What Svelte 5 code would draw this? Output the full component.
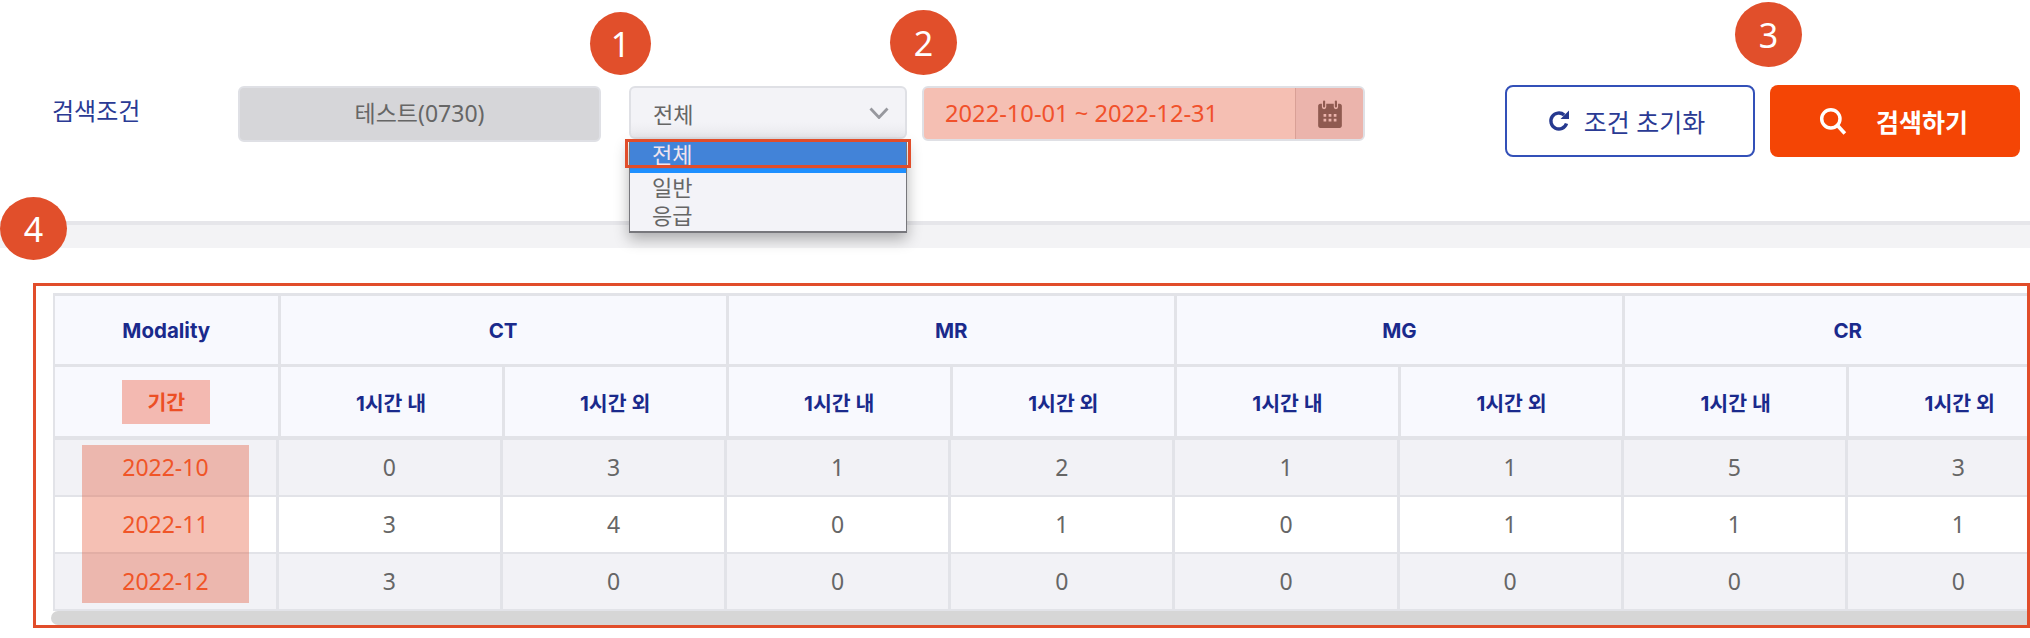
<script>
	const groups = ['CT', 'MR', 'MG', 'CR'];
	const subs = ['1시간 내', '1시간 외'];
	const rows = [
		{ period: '2022-10', values: [0, 3, 1, 2, 1, 1, 5, 3] },
		{ period: '2022-11', values: [3, 4, 0, 1, 0, 1, 1, 1] },
		{ period: '2022-12', values: [3, 0, 0, 0, 0, 0, 0, 0] }
	];
</script>

<div class="page">
	<div class="search">
		<div class="label">검색조건</div>
		<div class="field readonly">테스트(0730)</div>
		<div class="field select">
			<span>전체</span>
			<svg class="chevron" viewBox="0 0 20 12" width="20" height="12">
				<path d="M1.5 1.5 10 10.5 18.5 1.5" fill="none" stroke="#97989e" stroke-width="2.8" />
			</svg>
			<ul class="menu">
				<li class="selected">전체</li>
				<li>일반</li>
				<li>응급</li>
				<div class="menu-mark"></div>
			</ul>
		</div>
		<div class="field date">
			<span class="range">2022-10-01 ~ 2022-12-31</span>
			<span class="cal">
				<svg viewBox="0 0 26 26" width="28" height="28">
					<path
						fill="#8f5a50"
						fill-rule="evenodd"
						d="M2 5.5C2 4.4 2.9 3.5 4 3.5h1.5v3a2 2 0 0 0 4 0v-3h7v3a2 2 0 0 0 4 0v-3H22c1.100 0 2 .9 2 2V24c0 1.100-.9 2-2 2H4c-1.100 0-2-.9-2-2V5.500ZM7 13v2.500h2.500V13H7Zm4.700 0v2.500h2.600V13h-2.600Zm4.800 0v2.500H19V13h-2.500ZM7 17.500V20h2.500v-2.500H7Zm4.700 0V20h2.600v-2.500h-2.600Zm4.800 0V20H19v-2.500h-2.500Z"
					/>
					<rect x="6.500" y="0.500" width="2" height="6.500" rx="1" fill="#8f5a50" />
					<rect x="17.500" y="0.500" width="2" height="6.500" rx="1" fill="#8f5a50" />
				</svg>
			</span>
		</div>
		<div class="buttons">
			<button class="reset">
				<svg viewBox="0 0 24 24" width="24" height="24">
					<path d="M19.500 14.500A8 8 0 1 1 17.200 6" fill="none" stroke="#26398f" stroke-width="3.400" />
					<path d="M22 1.500V10h-8.500Z" fill="#26398f" />
				</svg>
				조건 초기화
			</button>
			<button class="submit">
				<svg viewBox="0 0 26 26" width="28" height="28">
					<circle cx="11" cy="11" r="8.500" fill="none" stroke="#fff" stroke-width="3.200" />
					<path d="M17 17 24 24.500" stroke="#fff" stroke-width="3.400" />
				</svg>
				검색하기
			</button>
		</div>
	</div>

	<div class="band"></div>

	<div class="frame">
		<div class="scroll">
			<table class="head">
				<colgroup>
					<col style="width: 225.500px" />
					{#each Array(8) as _}
						<col style="width: 224.100px" />
					{/each}
				</colgroup>
				<thead>
					<tr class="top">
						<th>Modality</th>
						{#each groups as group}
							<th colspan="2">{group}</th>
						{/each}
					</tr>
					<tr class="sub">
						<th><span class="period-mark">기간</span></th>
						{#each groups as group}
							{#each subs as sub}
								<th>{sub}</th>
							{/each}
						{/each}
					</tr>
				</thead>
			</table>
			<table class="body">
				<colgroup>
					<col style="width: 223.500px" />
					{#each Array(8) as _}
						<col style="width: 223.800px" />
					{/each}
				</colgroup>
				<tbody>
					{#each rows as row}
						<tr>
							<td class="period">{row.period}</td>
							{#each row.values as value}
								<td>{value}</td>
							{/each}
						</tr>
					{/each}
				</tbody>
			</table>
		</div>
		<div class="scrollbar"></div>
		<div class="period-box"></div>
	</div>

	<div class="badge one">1</div>
	<div class="badge two">2</div>
	<div class="badge three">3</div>
	<div class="badge four">4</div>
</div>

<style>
	:global(body) {
		margin: 0;
		background: #fff;
	}
	.page {
		position: relative;
		height: 638px;
		overflow: hidden;
		font-family: 'Noto Sans', 'Noto Sans CJK KR', sans-serif;
	}
	.search {
		display: flex;
		align-items: flex-start;
		height: 72px;
		padding: 85px 10px 0 52px;
	}
	.label {
		width: 186px;
		margin-top: 9px;
		font-size: 24px;
		line-height: 34px;
		color: #2a3a94;
	}
	.field {
		box-sizing: border-box;
		margin-top: 1px;
		border: 2px solid #dfe0e5;
		border-radius: 6px;
		font-size: 22px;
		color: #666;
	}
	.readonly {
		width: 363px;
		height: 56px;
		font-size: 23px;
		line-height: 50px;
		text-align: center;
		background: #d6d6d9;
	}
	.select {
		position: relative;
		display: flex;
		align-items: center;
		justify-content: space-between;
		width: 278px;
		height: 53px;
		margin-left: 28px;
		padding: 0 16px 0 22px;
		background: linear-gradient(#f3f3f7 70%, #e9e9ed);
	}
	.menu {
		position: absolute;
		top: 52px;
		left: -2px;
		width: 278px;
		height: 93px;
		box-sizing: border-box;
		margin: 0;
		padding: 0;
		list-style: none;
		background: #f3f3f8;
		border: 1px solid #77777c;
		border-bottom-width: 2px;
		box-shadow: 0 6px 14px rgba(0, 0, 0, 0.3);
		font-size: 22px;
		line-height: 28px;
		z-index: 2;
	}
	.menu li {
		padding-left: 22px;
	}
	.menu li.selected {
		height: 28px;
		line-height: 27px;
		color: #f0e4ee;
		background: #4283d8;
		border-bottom: 4px solid #1e8fff;
	}
	.menu-mark {
		position: absolute;
		top: -2px;
		left: -5px;
		right: -5px;
		height: 29px;
		box-sizing: border-box;
		border: 3px solid #e14d2a;
	}
	.date {
		display: flex;
		justify-content: space-between;
		width: 443px;
		height: 55px;
		margin-left: 15px;
		background: #f5bfb3;
	}
	.range {
		padding-left: 21px;
		font-size: 23.700px;
		line-height: 50px;
		color: #f1512b;
	}
	.cal {
		display: flex;
		align-items: center;
		justify-content: center;
		width: 67px;
		background: #ebb4ac;
		border-left: 1px solid #d9a096;
		border-radius: 0 4px 4px 0;
	}
	.buttons {
		display: flex;
		gap: 15px;
		margin-left: auto;
	}
	button {
		display: flex;
		align-items: center;
		justify-content: center;
		width: 250px;
		height: 72px;
		box-sizing: border-box;
		border-radius: 8px;
		font-family: inherit;
		font-size: 25px;
		cursor: pointer;
	}
	.reset {
		gap: 13px;
		padding-right: 14px;
		background: #fff;
		border: 2px solid #3350b8;
		color: #2a3a94;
	}
	.submit {
		gap: 29px;
		padding-right: 9px;
		background: #f44505;
		border: 0;
		color: #fff;
		font-weight: 700;
	}
	.band {
		box-sizing: border-box;
		height: 27px;
		margin-top: 64px;
		background: #f3f3f5;
		border-top: 4px solid #e6e6ea;
	}
	.frame {
		position: relative;
		box-sizing: border-box;
		height: 345px;
		margin: 35px 0 0 33px;
		padding: 7px 0 0 17px;
		border: 3px solid #e14d2a;
	}
	.scroll {
		overflow: hidden;
		height: 318px;
	}
	table {
		border-spacing: 0;
		table-layout: fixed;
		width: 2019px;
	}
	th,
	td {
		box-sizing: border-box;
		padding: 0;
		text-align: center;
		border-right: 3px solid #e2e3e8;
	}
	.head {
		background: #f8f9fe;
		border-left: 2px solid #e2e3e8;
	}
	th {
		font-family: Inter, 'Noto Sans CJK KR', sans-serif;
		font-size: 20.500px;
		font-weight: 700;
		color: #1a2a8c;
	}
	.top th {
		height: 74px;
		border-top: 3px solid #e2e3e8;
		border-bottom: 3px solid #e2e3e8;
	}
	.sub th {
		height: 73px;
		border-bottom: 4px solid #e2e3e8;
	}
	.period-mark {
		display: block;
		width: 88px;
		height: 44px;
		margin: 0 auto;
		line-height: 46px;
		background: #f3b9b1;
		color: #ec4f25;
	}
	.body {
		border-left: 2px solid #e2e3e8;
	}
	td {
		height: 57px;
		padding-bottom: 2px;
		font-size: 23px;
		color: #666;
		background: #f2f2f6;
		border-bottom: 2px solid #e2e3e8;
	}
	tr:nth-child(2) td {
		background: #fff;
	}
	td.period {
		color: #f75b28;
	}
	.scrollbar {
		height: 14px;
		margin-left: -2px;
		background: #d6d6d6;
		border-radius: 7px 0 0 7px;
	}
	.period-box {
		position: absolute;
		left: 46px;
		top: 159px;
		width: 167px;
		height: 158px;
		background: rgba(226, 75, 40, 0.35);
	}
	.badge {
		position: absolute;
		display: flex;
		align-items: center;
		justify-content: center;
		height: 63px;
		border-radius: 50%;
		background: #e14f2b;
		color: #fff;
		font-size: 34px;
		z-index: 3;
	}
	.one {
		left: 590px;
		top: 12px;
		width: 61px;
	}
	.two {
		left: 890px;
		top: 10px;
		width: 67px;
		height: 65px;
	}
	.three {
		left: 1735px;
		top: 2px;
		width: 67px;
		height: 65px;
	}
	.four {
		left: 0;
		top: 197px;
		width: 67px;
	}
</style>
